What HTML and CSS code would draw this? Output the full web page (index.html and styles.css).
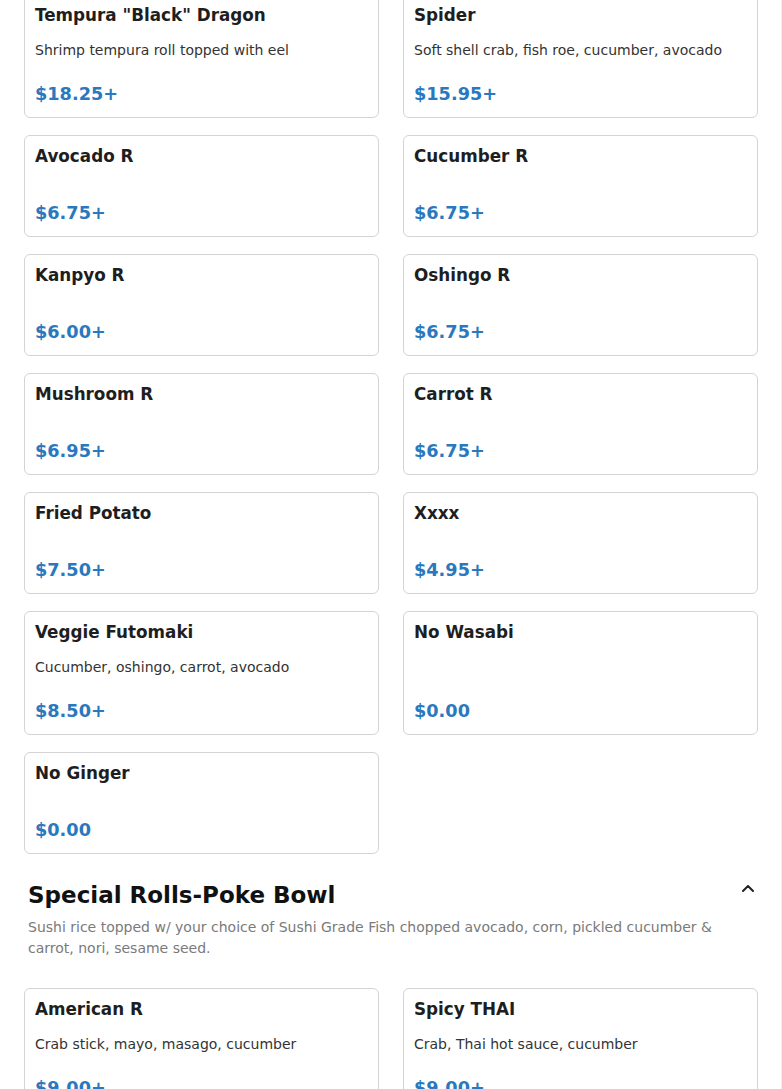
FILE: index.html
```html
<!DOCTYPE html>
<html lang="en">
<head>
<meta charset="utf-8">
<title>Menu</title>
<link rel="stylesheet" href="styles.css">
</head>
<body>
<main class="page">
  <section class="grid grid-top">
    <article class="card">
      <h3 class="card-title">Tempura "Black" Dragon</h3>
      <p class="card-desc">Shrimp tempura roll topped with eel</p>
      <div class="card-price">$18.25+</div>
    </article>
    <article class="card">
      <h3 class="card-title">Spider</h3>
      <p class="card-desc">Soft shell crab, fish roe, cucumber, avocado</p>
      <div class="card-price">$15.95+</div>
    </article>
    <article class="card">
      <h3 class="card-title">Avocado R</h3>
      <div class="card-price">$6.75+</div>
    </article>
    <article class="card">
      <h3 class="card-title">Cucumber R</h3>
      <div class="card-price">$6.75+</div>
    </article>
    <article class="card">
      <h3 class="card-title">Kanpyo R</h3>
      <div class="card-price">$6.00+</div>
    </article>
    <article class="card">
      <h3 class="card-title">Oshingo R</h3>
      <div class="card-price">$6.75+</div>
    </article>
    <article class="card">
      <h3 class="card-title">Mushroom R</h3>
      <div class="card-price">$6.95+</div>
    </article>
    <article class="card">
      <h3 class="card-title">Carrot R</h3>
      <div class="card-price">$6.75+</div>
    </article>
    <article class="card">
      <h3 class="card-title">Fried Potato</h3>
      <div class="card-price">$7.50+</div>
    </article>
    <article class="card">
      <h3 class="card-title">Xxxx</h3>
      <div class="card-price">$4.95+</div>
    </article>
    <article class="card">
      <h3 class="card-title">Veggie Futomaki</h3>
      <p class="card-desc">Cucumber, oshingo, carrot, avocado</p>
      <div class="card-price">$8.50+</div>
    </article>
    <article class="card">
      <h3 class="card-title">No Wasabi</h3>
      <div class="card-price">$0.00</div>
    </article>
    <article class="card">
      <h3 class="card-title">No Ginger</h3>
      <div class="card-price">$0.00</div>
    </article>
  </section>

  <section class="category">
    <header class="cat-head">
      <h2 class="cat-title">Special Rolls-Poke Bowl</h2>
      <svg class="chevron" width="12" height="8" viewBox="0 0 12 8" aria-hidden="true"><polyline points="1,7 6,2 11,7" fill="none" stroke="#222" stroke-width="2" stroke-linecap="round" stroke-linejoin="round"/></svg>
    </header>
    <p class="cat-desc">Sushi rice topped w/ your choice of Sushi Grade Fish chopped avocado, corn, pickled cucumber &amp; carrot, nori, sesame seed.</p>
    <div class="grid grid-cat">
      <article class="card">
        <h3 class="card-title">American R</h3>
        <p class="card-desc">Crab stick, mayo, masago, cucumber</p>
        <div class="card-price">$9.00+</div>
      </article>
      <article class="card">
        <h3 class="card-title">Spicy THAI</h3>
        <p class="card-desc">Crab, Thai hot sauce, cucumber</p>
        <div class="card-price">$9.00+</div>
      </article>
    </div>
  </section>
</main>
</body>
</html>
```

FILE: styles.css
```css
* { box-sizing: border-box; }

html, body {
  margin: 0;
  padding: 0;
  background: #fff;
}

body {
  font-family: "DejaVu Sans", Verdana, sans-serif;
  color: #222;
  overflow: hidden;
}

.page {
  border-right: 1px solid #eeeeee;
  min-height: 1089px;
}

.grid {
  display: grid;
  grid-template-columns: 355px 355px;
  column-gap: 24px;
  row-gap: 17px;
  padding: 0 24px;
}

.grid-top {
  margin-top: -6px;
}

.card {
  display: flex;
  flex-direction: column;
  border: 1px solid #d4d4d4;
  border-radius: 6px;
  padding: 9px 10px 11px;
  background: #fff;
}

.card-title {
  margin: 0 0 13px;
  font-size: 16.8px;
  line-height: 22px;
  font-weight: bold;
  color: #1e1e1e;
}

.card-desc {
  margin: 0;
  font-size: 14px;
  line-height: 22px;
  color: #333;
}

.card-price {
  margin-top: auto;
  padding-top: 22px;
  font-size: 17.7px;
  line-height: 23px;
  font-weight: bold;
  color: #2a78bd;
}

.category {
  margin-top: 28px;
}

.cat-head {
  display: flex;
  justify-content: space-between;
  align-items: flex-start;
  padding: 0 27px 0 28px;
}

.cat-title {
  margin: 0;
  font-size: 23px;
  line-height: 27px;
  font-weight: bold;
  color: #111;
}

.chevron {
  display: block;
  margin-top: 2px;
}

.cat-desc {
  margin: 8px 0 0;
  padding: 0 24px 0 28px;
  font-size: 14px;
  line-height: 21px;
  color: #7a7a7a;
}

.grid-cat {
  margin-top: 29px;
}
```
